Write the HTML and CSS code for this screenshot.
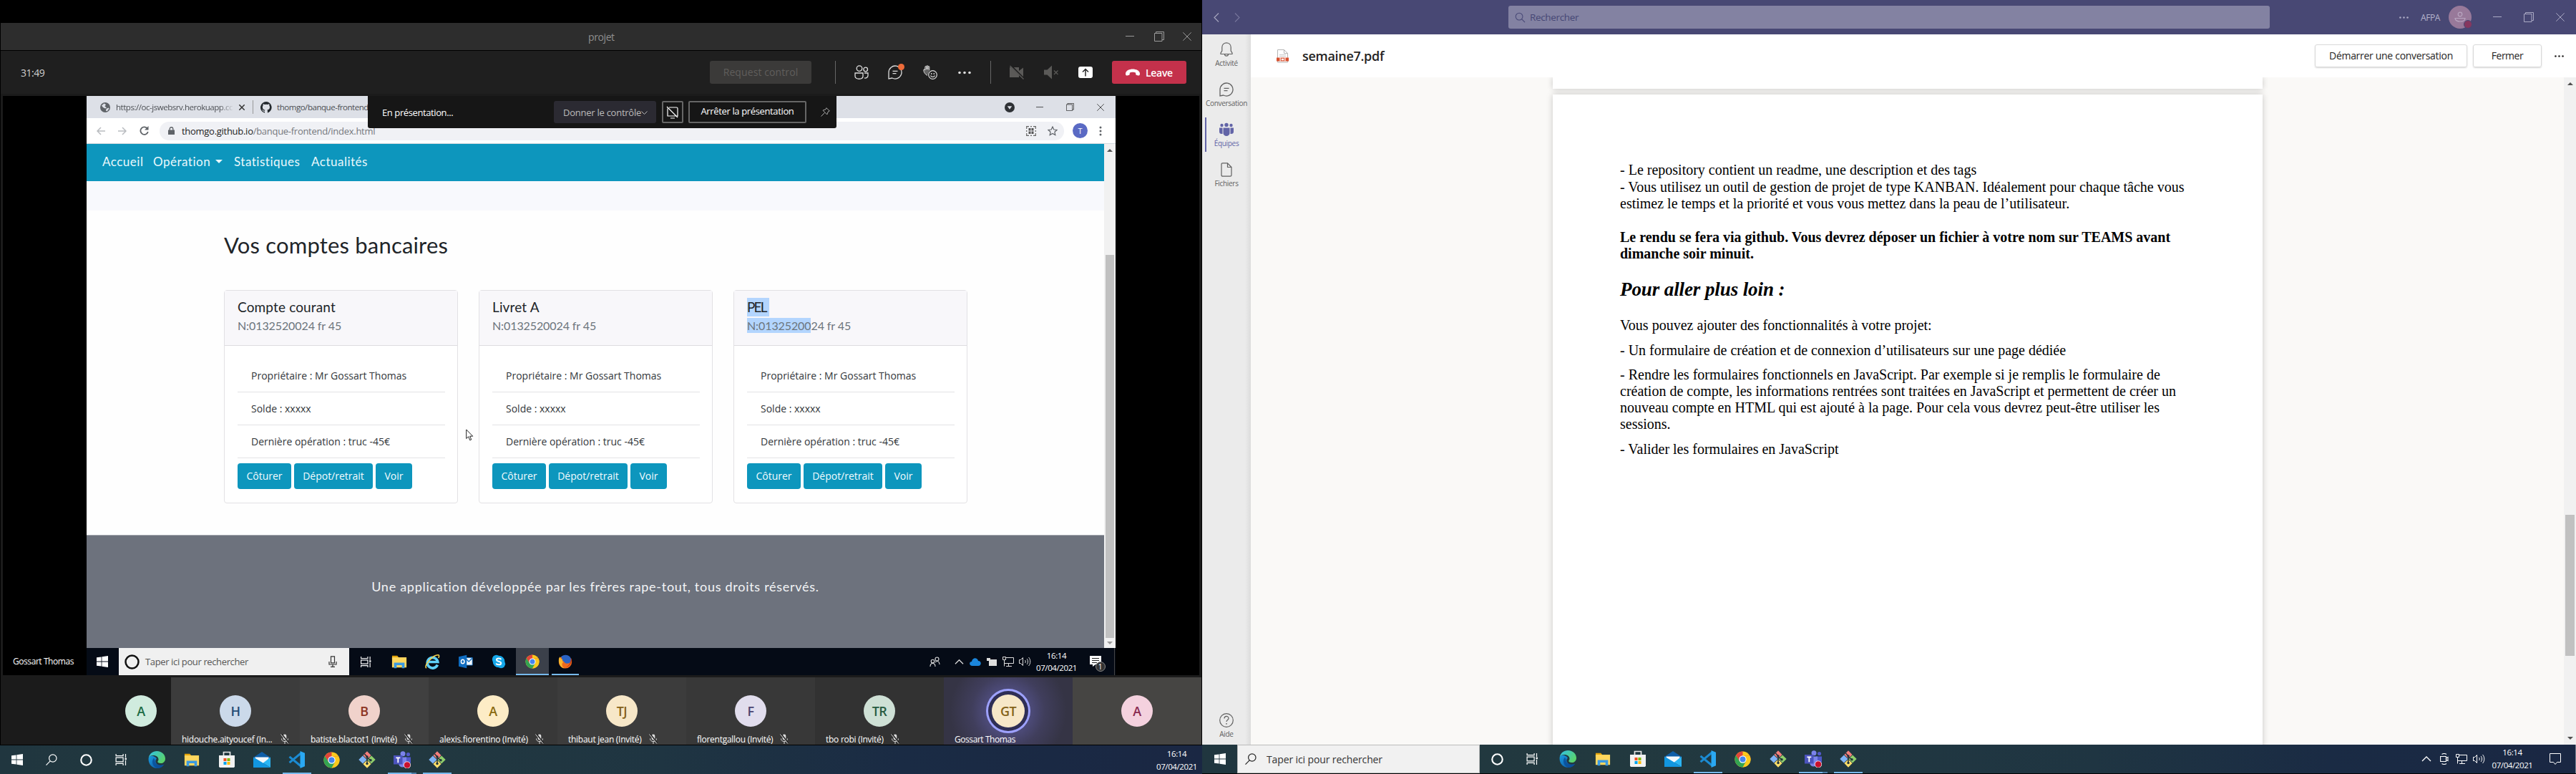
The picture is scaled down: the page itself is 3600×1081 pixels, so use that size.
FILE: index.html
```html
<!DOCTYPE html>
<html lang="fr">
<head>
<meta charset="utf-8">
<title>projet</title>
<link rel="stylesheet" href="styles.css">
</head>
<body>
<svg class="defs" width="0" height="0">
  <defs>
    <linearGradient id="edgeA" x1="0" y1="0" x2="1" y2="0.6"><stop offset="0" stop-color="#2fc0e8"/><stop offset="1" stop-color="#5bd36a"/></linearGradient>
    <linearGradient id="edgeB" x1="0" y1="0" x2="1" y2="1"><stop offset="0" stop-color="#1a9be0"/><stop offset="1" stop-color="#0b4f9c"/></linearGradient>
    <symbol id="win" viewBox="0 0 16 16"><path fill="currentColor" d="M0 2.3 6.6 1.4V7.6H0zM7.4 1.3 16 0V7.6H7.4zM0 8.4H6.6V14.6L0 13.7zM7.4 8.4H16V16L7.4 14.7z"/></symbol>
    <symbol id="search" viewBox="0 0 16 16"><g fill="none" stroke="currentColor" stroke-width="1.2"><circle cx="9.8" cy="6" r="5.2"/><path d="M6.2 9.9.5 15.6"/></g></symbol>
    <symbol id="searchR" viewBox="0 0 16 16"><g fill="none" stroke="currentColor" stroke-width="1.1"><circle cx="6.5" cy="6.5" r="5.2"/><path d="M10.2 10.2 15 15"/></g></symbol>
    <symbol id="cortana" viewBox="0 0 16 16"><circle cx="8" cy="8" r="6.8" fill="none" stroke="currentColor" stroke-width="2"/></symbol>
    <symbol id="taskview" viewBox="0 0 16 16"><g fill="none" stroke="currentColor" stroke-width="1.2"><path d="M.6 0v2.6h10V0M.6 16v-2.6h10V16M.6 5.2h10v5.6H.6zM14 0v5M14 9v7"/></g><path fill="currentColor" d="M13 5.6h2.4v2.6H13z"/></symbol>
    <symbol id="edge" viewBox="0 0 24 24"><path fill="url(#edgeB)" d="M.8 9C-.6 17 4.500 24 12.500 24c4 0 7.500-2 9.700-5.300-4.500 2.300-10.700 1-11.700-3.700-.5-2.500 1-4 1.500-4.500C8.500 5.500 2.500 5.800.8 9z"/><path fill="url(#edgeA)" d="M.8 9C2 3.800 6.600 0 12.200 0 19.200 0 24 5.200 24 10.400c0 4-2.700 6.600-6.400 6.600-2.800 0-4.600-1-4.300-2.200.3-.9 1.200-1.500 1.200-3.200C14.500 8.300 11.300 6 7.500 6 4.300 6 2 7.200.8 9z"/><path fill="#0a4a94" d="M8 9.800c-3.600 3.600-2.600 11.600 4.500 14.200 4 .2 7.600-2 9.700-5.300-5 2.500-13.200.5-12.700-6z" opacity=".75"/></symbol>
    <symbol id="explorer" viewBox="0 0 24 24"><path fill="#e5a50a" d="M1 3h8l2 2.500V9H1z"/><path fill="#ffd75e" d="M1 5.500h22V21H1z"/><path fill="#3b9ae0" d="M4 13.500h16V22h-4v-4.500H8V22H4z"/></symbol>
    <symbol id="store" viewBox="0 0 24 24"><path fill="none" stroke="#e8e8e8" stroke-width="1.700" d="M7.500 7V1.500h9V7"/><path fill="#f2f2f2" d="M1 6h22v15.500L22 23H2l-1-1.500z"/><path fill="#f25022" d="M7.500 10h4v4h-4z"/><path fill="#7fba00" d="M12.500 10h4v4h-4z"/><path fill="#00a4ef" d="M7.500 15h4v4h-4z"/><path fill="#ffb900" d="M12.500 15h4v4h-4z"/></symbol>
    <symbol id="mail" viewBox="0 0 24 24"><path fill="#0e5ea8" d="M0 9 12 1l12 8v6H0z"/><path fill="#f4f8fb" d="M2.500 8.500h19V17h-19z"/><path fill="#2bb5f4" d="M0 8.500 24 23V8.500L12 18z"/><path fill="#1296e0" d="M0 8.500V23h24z"/></symbol>
    <symbol id="vscode" viewBox="0 0 24 24"><path fill="none" stroke="#1b8bd2" stroke-width="3" d="M17.500 3 1.500 16.200M1.500 7.800 17.500 21"/><path fill="#2aa8f2" d="M16.500 0 23 2.700v18.600L16.500 24z"/></symbol>
    <symbol id="chrome" viewBox="0 0 24 24"><circle cx="12" cy="12" r="11.500" fill="#fbc91d"/><path fill="#e0463a" d="M12 12H23.500A11.500 11.500 0 0 0 2 6.300L7 15z M12 .5a11.500 11.500 0 0 1 10.200 6.200H12z"/><path fill="#fbc91d" d="M12 6.700h10.200A11.500 11.500 0 0 1 12 23.500l5-9z"/><path fill="#33a452" d="M2 6.300A11.500 11.500 0 0 0 12 23.500L16.600 15 7.400 14.600z"/><circle cx="12" cy="12" r="5.400" fill="#fff"/><circle cx="12" cy="12" r="4.200" fill="#4484ef"/></symbol>
    <symbol id="git" viewBox="0 0 24 24"><path fill="#f47f7c" d="m12 .3 5.600 5.600-5.600 5.600-5.600-5.600z"/><path fill="#7fb3f7" d="m5.900 6.400 5.600 5.600-5.600 5.600L.3 12z"/><path fill="#8fce6b" d="m18.100 6.400 5.600 5.600-5.600 5.600-5.600-5.600z"/><path fill="#ffdf6b" d="m12 12.500 5.600 5.600-5.600 5.600-5.600-5.600z"/><path fill="none" stroke="#20343c" stroke-width="1.500" d="M8.500 4 12 8v10M12 9l5 4"/><circle cx="12" cy="8" r="1.700" fill="#20343c"/><circle cx="12" cy="17.500" r="1.700" fill="#20343c"/><circle cx="17" cy="12.800" r="1.700" fill="#20343c"/></symbol>
    <symbol id="teams" viewBox="0 0 24 24"><circle cx="13" cy="3.800" r="3.500" fill="#7b83eb"/><circle cx="20.500" cy="4.500" r="2.600" fill="#5059c9"/><path fill="#5059c9" d="M16 8.500h8V15a4 4 0 0 1-8 0z"/><path fill="#7b83eb" d="M7 8.500h11V17a5.500 5.500 0 0 1-11 0z"/><path fill="#4b53bc" d="M0 6h12.500v12.500H0z"/><path fill="none" stroke="#fff" stroke-width="1.800" d="M3.300 9.300h6M6.300 9.300v7"/><circle cx="19" cy="19.500" r="4.700" fill="#c8102e" stroke="#fff" stroke-width=".8"/></symbol>
    <symbol id="ie" viewBox="0 0 24 24"><path fill="none" stroke="#5fd0f8" stroke-width="4" d="M20 17a8 8 0 1 1 .5-4.500H6"/><path fill="none" stroke="#f8d34a" stroke-width="1.700" d="M3 22C-1 17 14 1 21.500 2c1.500.5 1 3 0 4.500"/></symbol>
    <symbol id="outlook" viewBox="0 0 24 24"><path fill="#f2f7fc" stroke="#1472c4" d="M12 5.500h11V18H12z"/><path fill="none" stroke="#1472c4" stroke-width="1.600" d="m13 8 4 4 6-6"/><path fill="#0f6cc0" d="M0 4 13.500 1v22L0 20z"/><ellipse cx="6.800" cy="12" rx="2.700" ry="3.400" fill="none" stroke="#fff" stroke-width="1.800"/></symbol>
    <symbol id="skype" viewBox="0 0 24 24"><circle cx="8" cy="8" r="7" fill="#16a8ea"/><circle cx="16" cy="16" r="7" fill="#16a8ea"/><circle cx="12" cy="12" r="10" fill="#16a8ea"/><path fill="none" stroke="#fff" stroke-width="2.400" d="M16 8.500c-1-2.400-7.500-2.600-7.600.4 0 3.500 7.700 2 7.500 5.900-.2 3.400-7.300 3-8.200.2"/></symbol>
    <symbol id="firefox" viewBox="0 0 24 24"><circle cx="12" cy="12.500" r="11" fill="#ee6a1d"/><path fill="#2a63c4" d="M5 4c4-4.500 13-4 16 2 1.500 5-1 9-5 9-5 1-5-3-8-4z"/><path fill="#f8b62d" d="M1.500 6c-2 8 2 16 9 17.300C5 20 6 14 9 13c-2-1-2.500-3-1.500-4.500C5 8.500 4 7 3.500 4z"/><path fill="#c9370f" d="M22 6c2 5-1 14-9 15.500 6-3 7.500-7 9-15.500z"/></symbol>
    <symbol id="min" viewBox="0 0 12 12"><path stroke="currentColor" d="M0 5.500h12"/></symbol>
    <symbol id="restore" viewBox="0 0 14 14"><path fill="none" stroke="currentColor" d="M.5 2.500h10.500v11H.5zM2.500 2.500v-2h11v11h-2.500"/></symbol>
    <symbol id="close" viewBox="0 0 12 12"><path stroke="currentColor" d="m.3.300 11.400 11.400M11.700.3.300 11.700"/></symbol>
    <symbol id="dots" viewBox="0 0 18 4"><g fill="currentColor"><circle cx="2" cy="2" r="1.800"/><circle cx="9" cy="2" r="1.800"/><circle cx="16" cy="2" r="1.800"/></g></symbol>
    <symbol id="chat" viewBox="0 0 20 20"><path fill="none" stroke="currentColor" stroke-width="1.300" d="M1 19V10a9 9 0 1 1 4.800 8zM6.500 8.300h7M6.500 11.700h5"/></symbol>
    <symbol id="people" viewBox="0 0 20 20"><g fill="none" stroke="currentColor" stroke-width="1.300"><circle cx="7" cy="4.600" r="3.800"/><circle cx="15.700" cy="6" r="2.800"/><path d="M1 11h11v4.500c0 5-11 5-11 0zM14 11h5v3.500c0 2.500-2.500 4-5 3.400"/></g></symbol>
    <symbol id="hand" viewBox="0 0 20 20"><path fill="#666" stroke="#ddd" stroke-width=".9" d="M6 14.500C3 13 .8 10 .8 7c0-1.800 2-1.800 2 0V2.500c0-1.500 2-1.500 2 0V6 1.700c0-1.500 2-1.500 2 0V6 2.500c0-1.500 2-1.500 2 0V7.500"/><g fill="#1f1f1f" stroke="#ddd" stroke-width="1.200"><circle cx="13.500" cy="13.500" r="5.800"/><path d="M10.500 14.500c1 2.500 5 2.500 6 0"/></g><circle cx="11.700" cy="12" r=".9" fill="#ddd"/><circle cx="15.300" cy="12" r=".9" fill="#ddd"/></symbol>
    <symbol id="camoff" viewBox="0 0 22 20"><path fill="currentColor" d="M1 3h13v5l6-4.500v13L14 12v5H1z"/><path stroke="#1f1f1f" stroke-width="2.500" d="m2 0 19 19"/><path stroke="currentColor" stroke-width="1.400" d="m1.500 1 19 18.500"/></symbol>
    <symbol id="spkoff" viewBox="0 0 20 20"><path fill="currentColor" d="M0 6.500h4.500L11 .5v19l-6.500-6H0z"/><path stroke="currentColor" stroke-width="1.200" d="m14 7.500 5.500 5.500M19.500 7.500 14 13"/></symbol>
    <symbol id="phone" viewBox="0 0 20 10"><path fill="#fff" d="M0 6.500C1-1.500 19-1.500 20 6.500c0 3.500-1 3.500-5.500 2L14 5.500c-2-1-6-1-8 0l-.5 3C1 10 0 10 0 6.500z"/></symbol>
    <symbol id="micoff" viewBox="0 0 12 14"><rect x="3.700" y=".5" width="4.600" height="8" rx="2.300" fill="#ddd"/><path fill="none" stroke="#ddd" d="M1.500 6.500c0 5.500 9 5.500 9 0M6 10.500V14"/><path stroke="#222" stroke-width="2" d="m1.500 0 10 13"/><path stroke="#ddd" d="m.5.500 10.500 13"/></symbol>
    <symbol id="up" viewBox="0 0 14 14"><path fill="none" stroke="currentColor" stroke-width="1.300" d="m1 10 6-6 6 6"/></symbol>
    <symbol id="monitor" viewBox="0 0 16 14"><path fill="none" stroke="currentColor" d="M4.500 1.500h11v8H2.500V4M8.500 9.500v4M5 13.500h8M.5.500h4v4h-4zM2.500 4.500v9"/></symbol>
    <symbol id="sound" viewBox="0 0 17 14"><path fill="none" stroke="currentColor" d="M.5 4.500h2l3-3v11l-3-3h-2zM8.500 5c1 1 1 3 0 4M11 3c2 2 2 6 0 8M13.500 1c3 3 3 9 0 12"/></symbol>
    <symbol id="meet" viewBox="0 0 12 16"><path fill="none" stroke="currentColor" stroke-width="1.100" d="M.6 4.500h7.800v7H.6zM8.500 7l2.500-1.500v5L8.500 9M2.500 1.500C4.500.3 7 .3 9 1.500M2.500 14.500c2 1.200 4.500 1.200 6.500 0"/></symbol>
    <symbol id="notif" viewBox="0 0 16 16"><path fill="none" stroke="currentColor" d="M.5.500h15v12h-5L8 15.500l-2.500-3h-5z"/></symbol>
    <symbol id="doc" viewBox="0 0 16 20"><path fill="none" stroke="currentColor" stroke-width="1.200" d="M1 2.500Q1 .8 2.700.8H9.500L15 6.500v11q0 1.700-1.700 1.700H2.700Q1 19.200 1 17.500zM9.500.8v5.700H15"/></symbol>
  </defs>
</svg>
<div class="desktop">

<section class="screen-left">
  <div class="call">
    <header class="call-title">
      <span class="call-name">projet</span>
      <svg class="w12 ml749"><use href="#min"/></svg><svg class="w14 ml33"><use href="#restore"/></svg><svg class="w12 ml33"><use href="#close"/></svg>
    </header>
    <div class="call-tools">
      <span class="timer">31:49</span>
      <span class="request">Request control</span>
      <i class="vr"></i>
      <svg class="w20 t1"><use href="#people"/></svg>
      <span class="chat-badge"><svg class="w20"><use href="#chat"/></svg><b></b></span>
      <svg class="w20 t2"><use href="#hand"/></svg>
      <svg class="w18 t3"><use href="#dots"/></svg>
      <i class="vr v2"></i>
      <svg class="w22 dim t4"><use href="#camoff"/></svg>
      <svg class="w20 dim t5"><use href="#spkoff"/></svg>
      <span class="share"><svg width="10" height="12" viewBox="0 0 10 12"><path fill="none" stroke="#1f1f1f" stroke-width="1.400" d="M5 11.500V1.500M1 5.500l4-4 4 4"/></svg></span>
      <span class="leave"><svg width="20" height="10"><use href="#phone"/></svg>Leave</span>
    </div>

    <div class="stage">
      <span class="presenter">Gossart Thomas</span>
      <div class="shared">
        <div class="tabs">
          <svg class="globe" width="14" height="14" viewBox="0 0 14 14"><circle cx="7" cy="7" r="7" fill="#5f6368"/><path fill="#dde0e7" d="M2 4.500 5.500 1.500 8 3 6.500 5.500 9 7.500 7 8.500 4 7zM8.500 9l3-1.500 1 1L10 12H8z"/></svg>
          <span class="tab-name t-first">https://oc-jswebsrv.herokuapp.cc</span>
          <svg class="tab-x" width="8" height="8" viewBox="0 0 12 12"><path stroke="#333" stroke-width="2.200" d="m.3.300 11.400 11.400M11.700.3.300 11.700"/></svg>
          <i class="tab-sep"></i>
          <svg class="github" width="16" height="16" viewBox="0 0 16 16"><path fill="#24292e" d="M8 0a8 8 0 0 0-2.500 15.600c.4 0 .5-.2.5-.4v-1.500c-2.200.5-2.700-1-2.700-1-.4-.9-.9-1.200-.9-1.200-.7-.5 0-.5 0-.5.8.1 1.200.8 1.200.8.7 1.300 1.900.9 2.400.7 0-.5.300-.9.500-1.100-1.800-.2-3.600-.9-3.600-4 0-.8.300-1.500.8-2.100 0-.2-.4-1 .1-2.100 0 0 .7-.2 2.200.8a7.500 7.500 0 0 1 4 0c1.500-1 2.200-.8 2.200-.8.400 1.100.1 1.900 0 2.100.5.600.8 1.300.8 2.100 0 3.100-1.900 3.700-3.600 3.900.3.300.5.800.5 1.500v2.300c0 .2.100.4.500.4A8 8 0 0 0 8 0z"/></svg>
          <span class="tab-name t-second">thomgo/banque-frontend</span>
          <span class="win-btns"><svg width="14" height="14" viewBox="0 0 14 14"><circle cx="7" cy="7" r="7" fill="#2e3135"/><path fill="#dde0e7" d="M3.800 5.200h6.400L7 9.800z"/></svg><svg class="w10"><use href="#min"/></svg><svg class="w11"><use href="#restore"/></svg><svg class="w10"><use href="#close"/></svg></span>
        </div>
        <div class="urlbar">
          <svg class="nav-arrow" width="12" height="12" viewBox="0 0 12 12"><path fill="none" stroke="#b9bcc0" stroke-width="1.500" d="M12 6H1M6 1 1 6l5 5"/></svg>
          <svg class="nav-arrow n2" width="12" height="12" viewBox="0 0 12 12"><path fill="none" stroke="#b9bcc0" stroke-width="1.500" d="M0 6h11M6 1l5 5-5 5"/></svg>
          <svg class="nav-arrow n3" width="13" height="13" viewBox="0 0 13 13"><path fill="none" stroke="#5f6368" stroke-width="1.800" d="M11 3.500A5.300 5.300 0 1 0 11.800 8"/><path fill="#5f6368" d="M12.500 0v5.500H7z"/></svg>
          <div class="pill">
            <svg width="9" height="11" viewBox="0 0 9 11"><path fill="#5f6368" d="M0 4.500h9V11H0z"/><path fill="none" stroke="#5f6368" stroke-width="1.300" d="M2.200 5V3c0-3 4.600-3 4.600 0v2"/></svg>
            <span class="url"><b>thomgo.github.io</b>/banque-frontend/index.html</span>
            <svg class="qr" width="14" height="14" viewBox="0 0 14 14"><path fill="none" stroke="#666" stroke-width="1.200" d="M.7 4V.7H4M10 .7h3.300V4M13.300 10v3.300H10M4 13.300H.7V10M6 .7h2M6 13.300h2M.7 6v2M13.300 6v2"/><path fill="#555" d="M3.500 3h3v3.500h-3zM7.500 3h3v3.500h-3zM3.500 7.500h3V11h-3zM7.500 7.500h3V11h-3z"/></svg>
            <svg class="star" width="14" height="14" viewBox="0 0 14 14"><path fill="none" stroke="#5f6368" stroke-width="1.200" d="m7 1 1.800 4 4.300.4-3.200 2.900.9 4.300L7 10.400l-3.800 2.200.9-4.300L.9 5.400 5.200 5z"/></svg>
          </div>
          <span class="profile">T</span>
          <svg class="kebab" width="4" height="14" viewBox="0 0 4 14"><g fill="#5f6368"><circle cx="2" cy="2" r="1.500"/><circle cx="2" cy="7" r="1.500"/><circle cx="2" cy="12" r="1.500"/></g></svg>
        </div>
        <div class="viewport">
          <div class="page">
            <nav class="navbar"><a class="l-a">Accueil</a><a class="l-b">Opération<i class="caret"></i></a><a class="l-c">Statistiques</a><a class="l-d">Actualités</a></nav>
            <div class="banner"></div>
            <main class="accounts">
              <h1>Vos comptes bancaires</h1>
              <div class="cards">
                <article class="card">
                  <header><h2>Compte courant</h2><h3>N:0132520024 fr 45</h3></header>
                  <ul><li>Propriétaire : Mr Gossart Thomas</li><li>Solde : xxxxx</li><li>Dernière opération : truc -45€</li></ul>
                  <div class="btns"><a class="b1">Côturer</a><a class="b2">Dépot/retrait</a><a class="b3">Voir</a></div>
                </article>
                <article class="card">
                  <header><h2>Livret A</h2><h3>N:0132520024 fr 45</h3></header>
                  <ul><li>Propriétaire : Mr Gossart Thomas</li><li>Solde : xxxxx</li><li>Dernière opération : truc -45€</li></ul>
                  <div class="btns"><a class="b1">Côturer</a><a class="b2">Dépot/retrait</a><a class="b3">Voir</a></div>
                </article>
                <article class="card">
                  <header><h2><mark class="sel-title">PEL</mark></h2><h3><mark>N:01325200</mark>24 fr 45</h3></header>
                  <ul><li>Propriétaire : Mr Gossart Thomas</li><li>Solde : xxxxx</li><li>Dernière opération : truc -45€</li></ul>
                  <div class="btns"><a class="b1">Côturer</a><a class="b2">Dépot/retrait</a><a class="b3">Voir</a></div>
                </article>
              </div>
            </main>
            <footer class="site-footer">Une application développée par les frères rape-tout, tous droits réservés.</footer>
          </div>
          <div class="scroll-a"><i class="arrow-up"></i><i class="thumb"></i><i class="arrow-down"></i></div>
        </div>
        <div class="taskbar-s">
          <span class="s-win"><svg width="16" height="16"><use href="#win"/></svg></span>
          <span class="s-search"><svg width="21" height="21" viewBox="0 0 21 21"><circle cx="10.500" cy="10.500" r="9" fill="none" stroke="#111" stroke-width="2.500"/></svg><em>Taper ici pour rechercher</em><svg class="mic" width="12" height="16" viewBox="0 0 12 16"><path fill="none" stroke="#333" stroke-width="1.200" d="M3.500.8h5v9h-5zM1 8v4h10V8M6 12v4M3 15.400h6"/></svg></span>
          <span class="s-ico"><svg width="15" height="15"><use href="#taskview"/></svg></span>
          <span class="s-ico"><svg width="22" height="22"><use href="#explorer"/></svg></span>
          <span class="s-ico"><svg width="22" height="22"><use href="#ie"/></svg></span>
          <span class="s-ico"><svg width="20" height="20"><use href="#outlook"/></svg></span>
          <span class="s-ico"><svg width="20" height="20"><use href="#skype"/></svg></span>
          <span class="s-ico active"><svg width="20" height="20"><use href="#chrome"/></svg></span>
          <span class="s-ico open"><svg width="20" height="20"><use href="#firefox"/></svg></span>
          <span class="s-tray">
            <svg width="15" height="15" viewBox="0 0 15 15"><g fill="none" stroke="#ddd" stroke-width="1.100"><circle cx="10.500" cy="3.500" r="2.500"/><circle cx="4.500" cy="6.500" r="2.300"/><path d="M1 14c0-6 7-6 7 0M8 8c3-3 6-1 6 3"/></g></svg>
            <svg class="ms-a" width="13" height="13"><use href="#up"/></svg>
            <svg class="ms-b" width="16" height="11" viewBox="0 0 16 11"><path fill="#1b86dc" d="M4 11C-1 11-1 5 3 5 4-1 11-1 12 4c5 0 5 7 0 7z"/></svg>
            <svg class="ms-c" width="15" height="11" viewBox="0 0 15 11"><path fill="#ddd" d="M0 0h5v4H0zM3 2h11v9H3z"/></svg>
            <svg class="ms-d" width="16" height="14"><use href="#monitor"/></svg>
            <svg class="ms-e" width="17" height="14"><use href="#sound"/></svg>
            <span class="clock clock-s">16:14<br>07/04/2021</span>
            <span class="s-notif"><svg width="16" height="16" viewBox="0 0 16 16"><path fill="#fff" d="M0 0h16v12H8l-4 3v-3H0z"/><path stroke="#222" d="M3 3.500h10M3 6.500h10M3 9.500h7"/></svg><b>1</b></span>
            <i class="s-edge"></i>
          </span>
        </div>
        <div class="present">
          <span class="p-label">En présentation...</span>
          <span class="p-give">Donner le contrôle<svg width="9" height="9" viewBox="0 0 9 9"><path fill="none" stroke="#bbb" d="m.5 3.500 4 4 4-4"/></svg></span>
          <span class="p-icon"><svg width="18" height="18" viewBox="0 0 18 18"><path fill="none" stroke="#fff" stroke-width="1.200" d="M2 3.500V14h14V3.500Q16 2 14.500 2H4M1 1l15 15M6 17h6"/></svg></span>
          <span class="p-stop">Arrêter la présentation</span>
          <svg class="pin" width="13" height="13" viewBox="0 0 13 13"><path fill="none" stroke="#aaa" d="m8 .7 4.300 4.300-2 1-1.500 4L3 4.200l4-1.500zM5.500 7.500.5 12.500"/></svg>
        </div>
        <svg class="cursor" width="11" height="17" viewBox="0 0 11 17"><path fill="#fff" stroke="#222" d="M.7 1v12.500l3-2.700 2 5 2-.8-2-4.800h4z"/></svg>
      </div>
    </div>

    <div class="people">
      <div class="tile t-me"><span class="av c-a">A</span></div>
      <div class="tile k1"><span class="av c-h">H</span><span class="who">hidouche.aityoucef (In...<svg class="mo x1"><use href="#micoff"/></svg></span></div>
      <div class="tile k2"><span class="av c-b">B</span><span class="who">batiste.blactot1 (Invité)<svg class="mo"><use href="#micoff"/></svg></span></div>
      <div class="tile k3"><span class="av c-y">A</span><span class="who">alexis.fiorentino (Invité)<svg class="mo"><use href="#micoff"/></svg></span></div>
      <div class="tile k4"><span class="av c-y2">TJ</span><span class="who">thibaut jean (Invité)<svg class="mo"><use href="#micoff"/></svg></span></div>
      <div class="tile k3"><span class="av c-f">F</span><span class="who">florentgallou (Invité)<svg class="mo"><use href="#micoff"/></svg></span></div>
      <div class="tile k6"><span class="av c-t">TR</span><span class="who">tbo robi (Invité)<svg class="mo"><use href="#micoff"/></svg></span></div>
      <div class="tile k7"><span class="av c-y2 ring">GT</span><span class="who">Gossart Thomas</span></div>
      <div class="tile k8"><span class="av c-p">A</span></div>
    </div>
  </div>

  <div class="taskbar tb-left">
    <span class="ico first"><svg width="16" height="16"><use href="#win"/></svg></span>
    <span class="ico"><svg width="16" height="16"><use href="#search"/></svg></span>
    <span class="ico"><svg width="17" height="17"><use href="#cortana"/></svg></span>
    <span class="ico"><svg width="17" height="16"><use href="#taskview"/></svg></span>
    <span class="ico"><svg width="24" height="24"><use href="#edge"/></svg></span>
    <span class="ico"><svg width="24" height="22"><use href="#explorer"/></svg></span>
    <span class="ico"><svg width="24" height="24"><use href="#store"/></svg></span>
    <span class="ico"><svg width="24" height="24"><use href="#mail"/></svg></span>
    <span class="ico open"><svg width="24" height="24"><use href="#vscode"/></svg></span>
    <span class="ico"><svg width="23" height="23"><use href="#chrome"/></svg></span>
    <span class="ico"><svg width="24" height="24"><use href="#git"/></svg></span>
    <span class="ico open multi"><svg width="24" height="24"><use href="#teams"/></svg></span>
    <span class="ico open"><svg width="24" height="24"><use href="#git"/></svg></span>
    <span class="clock clock-l">16:14<br>07/04/2021</span>
  </div>
</section>

<section class="screen-right">
  <header class="t-head">
    <svg class="chev" width="8" height="13" viewBox="0 0 8 13"><path fill="none" stroke="#a5a4bd" stroke-width="1.200" d="M7 .5 1 6.500l6 6"/></svg>
    <svg class="chev ch2" width="8" height="13" viewBox="0 0 8 13"><path fill="none" stroke="#76759b" stroke-width="1.200" d="m1 .5 6 6-6 6"/></svg>
    <div class="t-search"><svg width="15" height="15"><use href="#searchR"/></svg>Rechercher</div>
    <svg class="hd" width="13" height="3"><use href="#dots"/></svg>
    <span class="org">AFPA</span>
    <span class="user"><svg width="16" height="16" viewBox="0 0 16 16"><g fill="none" stroke="#b9a6c0" stroke-width="1.200"><circle cx="8" cy="4" r="2.800"/><path d="M1 9.500h14c0 6-14 6-14 0z"/></g></svg><b></b></span>
    <svg class="w12 hw1"><use href="#min"/></svg><svg class="w14 hw2"><use href="#restore"/></svg><svg class="w12 hw3"><use href="#close"/></svg>
  </header>
  <div class="t-body">
    <aside class="rail">
      <a><svg width="20" height="20" viewBox="0 0 20 20"><path fill="none" stroke="currentColor" stroke-width="1.200" d="M2 16.500V15l1.800-3V7c0-8.200 12.400-8.200 12.400 0v5L18 15v1.500zM7.500 16.500c0 3.600 5 3.600 5 0"/></svg>Activité</a>
      <a><svg width="20" height="20"><use href="#chat"/></svg>Conversation</a>
      <a class="on"><svg width="20" height="20" viewBox="0 0 20 20"><g fill="currentColor"><circle cx="10" cy="3.400" r="2.700"/><circle cx="3.500" cy="4" r="2.200"/><circle cx="16.500" cy="4" r="2.200"/><path d="M5.500 7.500h9V15a4.500 4 0 0 1-9 0zM0 7.500h4.500V16C1.500 16.500 0 15 0 13zM20 7.500h-4.500V16c3 .5 4.500-1 4.500-3z"/></g></svg>Équipes</a>
      <a><svg width="16" height="20"><use href="#doc"/></svg>Fichiers</a>
      <a class="help"><svg width="20" height="20" viewBox="0 0 20 20"><g fill="none" stroke="currentColor" stroke-width="1.200"><circle cx="10" cy="10" r="9.300"/><path d="M7 7.500c0-4 6-4 6-.3C13 9.500 10 9.500 10 12"/></g><circle cx="10" cy="14.800" r=".9" fill="currentColor"/></svg>Aide</a>
    </aside>
    <div class="viewer">
      <div class="file-head">
        <svg width="17" height="19" viewBox="0 0 17 19"><path fill="#fff" stroke="#b5b5b5" d="M1.500.5h9l5 5v12.500h-14zM10.500.5v5h5"/><path stroke="#ccc" d="M4 7.500h9M4 9.500h9"/><path fill="#d8502f" d="M0 11.500h17v5H0z"/><path fill="#fff" d="M4.500 11.500h1.200v5H4.500zM11.300 11.500h1.200v5h-1.200zM6.800 12.700h3.400v2.600H6.800z"/></svg>
        <strong>semaine7.pdf</strong>
        <span class="btn d1">Démarrer une conversation</span><span class="btn d2">Fermer</span>
        <svg class="more" width="13" height="3"><use href="#dots"/></svg>
      </div>
      <div class="doc-wrap">
        <div class="doc-area">
          <div class="sheet prev"></div>
          <div class="sheet main">
            <p>- Le repository contient un readme, une description et des tags</p>
            <p class="p2">- Vous utilisez un outil de gestion de projet de type KANBAN. Idéalement pour chaque tâche vous<br>estimez le temps et la priorité et vous vous mettez dans la peau de l’utilisateur.</p>
            <p class="bold">Le rendu se fera via github. Vous devrez déposer un fichier à votre nom sur TEAMS avant<br>dimanche soir minuit.</p>
            <h4>Pour aller plus loin :</h4>
            <p>Vous pouvez ajouter des fonctionnalités à votre projet:</p>
            <p class="sp">- Un formulaire de création et de connexion d’utilisateurs sur une page dédiée</p>
            <p class="sp">- Rendre les formulaires fonctionnels en JavaScript. Par exemple si je remplis le formulaire de<br>création de compte, les informations rentrées sont traitées en JavaScript et permettent de créer un<br>nouveau compte en HTML qui est ajouté à la page. Pour cela vous devrez peut-être utiliser les<br>sessions.</p>
            <p class="sp">- Valider les formulaires en JavaScript</p>
          </div>
        </div>
        <div class="scroll-b"><i class="arrow-up"></i><i class="thumb"></i><i class="arrow-down"></i></div>
      </div>
    </div>
  </div>
  <div class="taskbar tb-right">
    <span class="ico"><svg width="16" height="16"><use href="#win"/></svg></span>
    <span class="r-search"><svg width="16" height="16"><use href="#search"/></svg>Taper ici pour rechercher</span>
    <span class="ico"><svg width="17" height="17"><use href="#cortana"/></svg></span>
    <span class="ico"><svg width="17" height="16"><use href="#taskview"/></svg></span>
    <span class="ico"><svg width="24" height="24"><use href="#edge"/></svg></span>
    <span class="ico"><svg width="24" height="22"><use href="#explorer"/></svg></span>
    <span class="ico"><svg width="24" height="24"><use href="#store"/></svg></span>
    <span class="ico"><svg width="24" height="24"><use href="#mail"/></svg></span>
    <span class="ico open"><svg width="24" height="24"><use href="#vscode"/></svg></span>
    <span class="ico"><svg width="23" height="23"><use href="#chrome"/></svg></span>
    <span class="ico"><svg width="24" height="24"><use href="#git"/></svg></span>
    <span class="ico open multi"><svg width="24" height="24"><use href="#teams"/></svg></span>
    <span class="ico open"><svg width="24" height="24"><use href="#git"/></svg></span>
    <span class="tray">
      <svg width="14" height="14"><use href="#up"/></svg>
      <svg class="mr-a" width="12" height="16"><use href="#meet"/></svg>
      <svg class="mr-b" width="16" height="14"><use href="#monitor"/></svg>
      <svg class="mr-c" width="17" height="14"><use href="#sound"/></svg>
      <span class="clock clock-r">16:14<br>07/04/2021</span>
      <svg class="mr-d" width="16" height="16"><use href="#notif"/></svg>
      <i class="r-edge"></i>
    </span>
  </div>
</section>
</div>
</body>
</html>
```
FILE: styles.css
```css
*{box-sizing:border-box}
body{margin:0;background:#000;font:14px "Open Sans","Noto Sans",sans-serif;white-space:nowrap}
h1,h2,h3,h4,p,ul{margin:0;padding:0;font-weight:400;list-style:none}
i,em{font-style:normal}
svg{display:block;flex:none}
.defs{position:absolute}
.desktop{display:flex;width:3600px;height:1081px;overflow:hidden}
.w10{width:10px;height:10px}.w11{width:11px;height:11px}.w12{width:12px;height:12px}.w14{width:14px;height:14px}
.w18{width:18px;height:5px}.w20{width:20px;height:20px}.w22{width:22px;height:20px}

/* left screen: meeting window */
.screen-left{width:1680px;flex:none;padding-top:32px}
.call{width:1678px;height:1008px;margin-left:1px;background:#1b1b1b;display:flex;flex-direction:column}
.call-title{height:39px;background:#2d2d2d;border-bottom:1px solid #000;display:flex;align-items:center;color:#9a9a9a}
.call-name{width:37px;margin-left:821px;letter-spacing:-.4px;color:#8f8f8f}
.ml749{margin-left:714px}.ml33{margin-left:28px}
.ml33+.ml33{margin-left:26px}
.call-tools{height:60px;background:#1f1f1f;display:flex;align-items:center;color:#ddd}
.timer{width:40px;margin-left:28px;letter-spacing:-.5px;color:#d0d0d0}
.request{width:142px;height:32px;margin-left:923px;background:#3b3a39;color:#605e5c;border-radius:3px;text-align:center;line-height:31px;letter-spacing:.1px}
.vr{width:1px;height:32px;flex:none;background:#666;margin-left:33px}
.t1{margin-left:26px}
.chat-badge{position:relative;margin-left:27px}
.chat-badge b{position:absolute;left:14px;top:-2px;width:9px;height:9px;border-radius:50%;background:#ee6c3a}
.t2{margin-left:29px}.t3{margin-left:29px}.v2{margin-left:27px}
.dim{color:#5b5a58}
.t4{margin-left:25px}.t5{margin-left:27px}
.share{width:20px;height:16px;margin-left:28px;background:#fff;border-radius:3px;display:flex;align-items:center;justify-content:center}
.leave{width:104px;height:32px;margin-left:27px;background:#c4314b;border-radius:3px;color:#fff;font-weight:600;display:flex;align-items:center;gap:8px;padding-left:19px;letter-spacing:-.3px}

.stage{position:relative;height:809px;margin:3px 3px 0;background:#000;display:flex;align-items:flex-end}
.presenter{width:117px;flex:none;padding:0 0 10px 14px;color:#fff;font-size:12px;letter-spacing:-.43px;line-height:18px}
.shared{position:relative;width:1438px;height:809px;flex:none;background:#fefefe;overflow:hidden}
.tabs{height:31px;background:#dde0e7;display:flex;align-items:center;font-size:11.500px;color:#4b4e53}
.globe{margin-left:19px}
.tab-name{overflow:hidden}
.t-first{width:168px;margin-left:8px;letter-spacing:-.46px;-webkit-mask-image:linear-gradient(90deg,#000 145px,transparent 165px);mask-image:linear-gradient(90deg,#000 145px,transparent 165px)}
.tab-x{margin-left:4px}
.tab-sep{width:1px;height:19px;background:#999;margin-left:11px}
.github{margin-left:10px}
.t-second{width:130px;margin-left:7px;letter-spacing:-.46px}
.win-btns{display:flex;align-items:center;margin-left:887px;color:#333}
.win-btns svg+svg{margin-left:30px}
.win-btns svg+svg+svg{margin-left:32px}.win-btns svg+svg+svg+svg{margin-left:32px}
.urlbar{height:36px;border-bottom:1px solid #d3d9de;display:flex;align-items:center;background:#fff}
.nav-arrow{margin-left:14px}.n2{margin-left:18px}.n3{margin-left:18px}
.pill{width:1264px;height:26px;margin-left:15px;background:#f0f1f5;border-radius:13px;display:flex;align-items:center;padding-left:12px}
.url{width:280px;margin-left:10px;color:#75787d;font-size:13px;letter-spacing:-.28px}
.url b{font-weight:400;color:#222}
.qr{margin-left:900px}.star{margin-left:16px}
.profile{width:21px;height:21px;margin-left:12px;border-radius:50%;background:#5a6ac4;color:#fff;font-size:11px;text-align:center;line-height:21px}
.kebab{margin-left:16px}
.viewport{height:704px;display:flex}
.page{width:1422px;display:flex;flex-direction:column;font-family:Lato,sans-serif}
.navbar{height:52px;background:#0d96bd;color:#e9f8fc;display:flex;align-items:center;padding:0 0 4px 22px;font-size:17px;letter-spacing:.5px}
.navbar a{display:flex;align-items:center}
.l-a{width:71px}.l-b{width:113px}.l-c{width:108px}
.caret{border:5px solid transparent;border-top-color:#e9f8fc;border-bottom:0;margin-left:7px}
.banner{height:41px;background:#f8f9fd}
.accounts{height:453px;padding:30px 0 0 192px}
.accounts h1{font-size:31px;line-height:36px;color:#212529;letter-spacing:.18px}
.cards{display:flex;gap:29px;margin-top:45px}
.card{width:327px;height:298px;border:1px solid #e2e1e4;border-radius:4px;background:#fff;color:#32363a}
.card header{height:77px;padding:10px 0 0 18px;background:#f8f7fa;border-bottom:1px solid #dddcdf;margin-bottom:19px}
.card h2{font-size:19px;line-height:26px;color:#212529;letter-spacing:.15px}
.card h3{font-size:16px;line-height:21px;margin-top:2px;color:#6c757d;letter-spacing:-.1px}
mark{display:inline-block;background:#b3d5fe;color:inherit}
.sel-title{width:31px;letter-spacing:-1.800px}
.card ul{width:290px;margin-left:18px;font:14px "Open Sans",sans-serif}
.card li{height:46px;line-height:45px;padding-left:19px;border-bottom:1px solid #e3e3e5}
.btns{display:flex;margin:7px 0 0 18px;font:14px/35px "Open Sans",sans-serif;color:#f3fbfd;text-align:center}
.btns a{height:36px;background:#0d96bd;border-radius:4px}
.b1{width:75px}.b2{width:110px;margin:0 4px}.b3{width:51px}
.site-footer{height:158px;background:#6d727d;border-top:1px solid #a3a6ae;color:#f3f4f6;font-size:18px;letter-spacing:.72px;text-align:center;line-height:143px}
.scroll-a{width:16px;background:#f1f1f1;display:flex;flex-direction:column;align-items:center;padding:7px 0 5px}
.arrow-up{border:4px solid transparent;border-bottom-color:#505050;border-top:0}
.arrow-down{border:4px solid transparent;border-top-color:#505050;border-bottom:0;margin-top:auto}
.scroll-a .thumb{width:12px;height:535px;margin-top:144px;background:#c1c1c1}
.scroll-a .arrow-down{border-top-color:#999}

.taskbar-s{height:38px;background:#050b16;display:flex;color:#fff}
.s-win{width:45px;display:flex;align-items:center;padding-left:14px}
.s-search{width:322px;background:#f0f0f0;display:flex;align-items:center;padding-left:8px;color:#555}
.s-search em{width:256px;margin-left:8px;font-size:13px;letter-spacing:-.37px}
.s-ico{width:46.5px;display:flex;align-items:center;justify-content:center;border-bottom:2px solid transparent;padding-top:2px}
.s-ico.active{background:#3b404a;border-color:#76b9ed}
.s-ico.open{background:linear-gradient(#76b9ed,#76b9ed) 50% 100%/38px 2px no-repeat;background-origin:border-box}
.s-tray{display:flex;align-items:center;margin-left:485px;color:#ddd}
.ms-a{margin-left:20px}.ms-b{margin-left:8px}.ms-c{margin-left:8px}.ms-d{margin-left:7px}.ms-e{margin-left:7px}
.clock{font-size:11.500px;text-align:center;letter-spacing:-.4px;color:#fff}
.clock-s{width:64px;line-height:17px;margin-left:4px}
.s-notif{position:relative;margin-left:14px}
.s-notif b{position:absolute;left:8px;top:8px;width:14px;height:14px;border-radius:50%;background:#333;border:1px solid #888;font:10px/12px "Open Sans";text-align:center;color:#fff}
.s-edge{width:1px;height:38px;background:#444;margin-left:18px}

.present{position:absolute;left:393px;top:0;width:655px;height:45px;background:#161616;border-radius:0 0 3px 3px;display:flex;align-items:center;font-size:13px;color:#fff}
.p-label{width:240px;padding-left:20px;letter-spacing:-.4px}
.p-give{width:143px;height:31px;margin-left:20px;background:#2b2a32;border-radius:3px;color:#bbb;display:flex;align-items:center;padding-left:13px;letter-spacing:-.25px}
.p-icon{width:30px;height:31px;margin-left:8px;border:2px solid #666;border-radius:2px;display:flex;align-items:center;justify-content:center}
.p-stop{width:165px;height:31px;margin-left:7px;border:2px solid #666;border-radius:2px;text-align:center;line-height:25px;letter-spacing:-.36px}
.pin{margin-left:20px}
.cursor{position:absolute;left:530px;top:465px}

.people{display:flex;height:94px;margin-top:3px}
.tile{position:relative;width:180px;flex:none;display:flex;flex-direction:column;align-items:center;padding-top:25px}
.t-me{width:238px;padding-left:154px}
.k1{background:#3c3c3c}.k2{background:#404040}.k3{background:#383838}.k4{background:#3c3c3c}.k6{background:#323232}
.k7{background:radial-gradient(circle at 50% 50%,#55538c 18%,#403e5c 50%,#353445 80%)}.k8{background:#464543}
.av{width:44px;height:44px;border-radius:50%;font-size:18px;font-weight:600;line-height:44px;text-align:center;letter-spacing:-.5px;flex:none}
.c-a{background:#d0ebde;color:#1d6b45}.c-h{background:#cbd9ea;color:#234b75}.c-b{background:#f0d2cb;color:#8c3522}
.c-y{background:#fdecc6;color:#8a6a10}.c-y2{background:#f7e7c8;color:#846118}.c-f{background:#e1dded;color:#4a4470}
.c-t{background:#cee0d5;color:#265b40}.c-p{background:#f4d1de;color:#8a2a50}
.ring{width:46px;height:46px;line-height:46px;margin:-1px;box-shadow:0 0 0 5px #2f2e55,0 0 0 8px #9ea2ff}
.who{width:180px;margin-top:9px;padding-left:15px;display:flex;align-items:center;color:#fff;font-size:12px;line-height:18px;letter-spacing:-.27px}
.ring+.who{margin-top:9px;letter-spacing:-.43px}
.mo{width:12px;height:14px;margin-left:10px;margin-top:-3px}
.x1{margin-left:12px}

.taskbar{display:flex;align-items:stretch;color:#fff}
.tb-left{height:40px;margin-top:1px;background:linear-gradient(90deg,#20363f 0,#22393f 28%,#1f3542 55%,#1a2b44 75%,#1a2743)}
.ico{width:49px;flex:none;display:flex;align-items:center;justify-content:center}
.ico.first{width:47px}
.open{background:linear-gradient(#76b9ed,#76b9ed) 50% 100%/40px 2px no-repeat}
.multi{background:linear-gradient(90deg,#76b9ed 33px,#4c7ea8 33px) 50% 100%/40px 2px no-repeat}
.clock-l{width:71px;margin-left:974px;line-height:18px;padding-top:1px;align-self:center}

/* right screen: file viewer */
.screen-right{width:1920px;height:1081px;flex:none;display:flex;flex-direction:column}
.t-head{height:48px;background:#484874;display:flex;align-items:center;color:#aaa9c4}
.chev{margin-left:16px}.ch2{margin-left:21px}
.t-search{width:1064px;height:32px;margin-left:375px;background:#8382a2;border-radius:3px;display:flex;align-items:center;padding-left:9px;gap:6px;color:#464775;font-size:13.500px;letter-spacing:-.35px}
.hd{margin-left:181px}
.org{width:28px;margin-left:17px;font-size:12px;letter-spacing:-.4px;color:#b5b4cc}
.user{position:relative;width:32px;height:32px;margin-left:11px;border-radius:50%;background:#98799a;display:flex;align-items:center;justify-content:center}
.user b{position:absolute;left:21px;top:20px;width:12px;height:12px;border-radius:50%;background:#86375f;border:1px solid #484874}
.hw1{margin-left:30px}.hw2{margin-left:31px}.hw3{margin-left:31px}
.t-body{display:flex;height:992px}
.rail{width:68px;height:992px;background:linear-gradient(90deg,#ebebeb 60px,#dcdcdc 68px);display:flex;flex-direction:column}
.rail a{height:56px;display:flex;flex-direction:column;align-items:center;padding-top:11px;font-size:10px;line-height:14px;color:#616161;letter-spacing:-.3px;gap:2px}
.rail .on{color:#6264a7;background:linear-gradient(#6264a7,#6264a7) 4px 4px/2px 48px no-repeat}
.rail .help{margin:auto 0 -1px;height:45px;padding-top:0}
.viewer{width:1852px}
.file-head{height:60px;background:#fff;display:flex;align-items:center;padding-left:36px;color:#252423;font-size:14px;font-weight:500}
.file-head strong{width:140px;margin-left:19px;font-size:18px;font-weight:600;letter-spacing:-.3px}
.btn{height:32px;border:1px solid #d9d9d9;border-radius:3px;box-shadow:0 1px 2px rgba(0,0,0,.15);line-height:30px;text-align:center;letter-spacing:-.3px}
.d1{width:213px;margin-left:1275px}.d2{width:96px;margin-left:8px;letter-spacing:-.5px}
.more{margin-left:18px}
.doc-wrap{display:flex;height:932px}
.doc-area{width:1835px;background:#faf9f7;overflow:hidden;padding-left:422px}
.sheet{width:992px;background:#fff;box-shadow:0 0 9px rgba(0,0,0,.2)}
.prev{height:16px}
.main{height:930px;margin-top:8px;padding:94px 0 0 94px;font:20px/23px "Liberation Serif","Times New Roman",serif;color:#000}
.p2{margin-top:1px}
.bold{font-weight:700;margin:24px 0 23px}
.main h4{font:italic bold 27px/30px "Liberation Serif",serif;letter-spacing:-.1px;margin-bottom:24px}
.sp{margin-top:11.500px}
.scroll-b{width:17px;background:#f1f1f1;display:flex;flex-direction:column;align-items:center;padding:7px 0 7px}
.scroll-b .thumb{width:13px;height:197px;margin-top:600px;background:#c1c1c1}
.tb-right{height:40px;background:linear-gradient(90deg,#20363f 0,#22393f 30%,#1f3542 65%,#1a2b44 82%,#1a2743)}
.r-search{width:344px;height:40px;background:#f1f1f1;border:1px solid #bbb;display:flex;align-items:center;padding-left:10px;gap:14px;color:#333;font-size:14px;letter-spacing:-.12px}
.r-search svg{color:#222}
.tray{display:flex;align-items:center;margin-left:777px;flex:none}
.mr-a{margin-left:12px}.mr-b{margin-left:10px}.mr-c{margin-left:8px}.mr-d{margin-left:16px}
.clock-r{width:72px;line-height:18px;margin-left:2px}
.r-edge{width:1px;height:40px;background:#7d8594;margin-left:20px}
```
